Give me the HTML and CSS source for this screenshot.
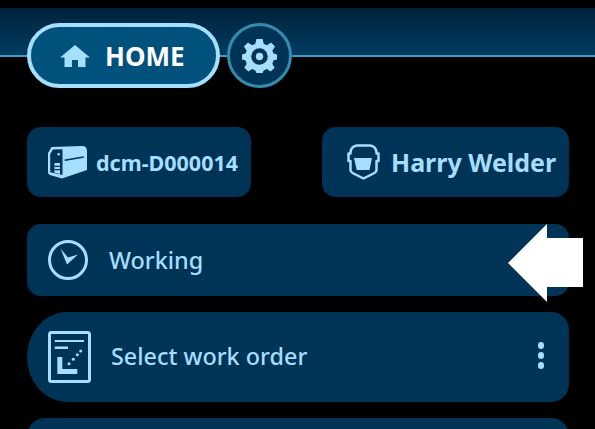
FILE: index.html
```html
<!DOCTYPE html>
<html lang="en">
<head>
  <meta charset="UTF-8" />
  <title>Home</title>
  <link rel="stylesheet" href="styles.css">
</head>
<body>

  <header class="topbar">
    <div class="topbar-nav">
      <div class="home-pill">
        <svg class="home-icon" viewBox="0 0 30 24">
          <path d="M15 1 L30 13.500 H25.500 V23 H18 V16 H12 V23 H4.500 V13.500 H0 Z" fill="#a5deff"/>
        </svg>
        <span>HOME</span>
      </div>
      <div class="gear-btn">
        <svg class="gear-icon" viewBox="0 0 36 36">
          <path fill="#a5deff" fill-rule="evenodd" d="M14.800 1 H21.200 L22.300 6 L25.600 7.400 L29.900 4.600 L34 8.800 L31.200 13 L32.500 16 L36 17 V22 L32.500 23 L31.200 26.500 L33.600 30.500 L29.500 34.500 L25.600 32 L22.300 33.300 L21.200 36 H14.800 L13.700 33.300 L10.400 32 L6.500 34.500 L2.400 30.500 L4.800 26.500 L3.500 23 L0 22 V17 L3.500 16 L4.800 13 L2 8.800 L6.100 4.600 L10.400 7.400 L13.700 6 Z M18 10.500 A8.500 8.500 0 1 0 18 27.500 A8.500 8.500 0 1 0 18 10.500 Z"/>
          <circle cx="18" cy="19" r="3.800" fill="#a5deff"/>
        </svg>
      </div>
    </div>
  </header>

  <main class="content">
    <div class="info-row">
      <div class="card card-printer">
        <svg class="printer-icon" viewBox="0 0 40 34">
          <path fill="#a5deff" d="M4.500 2 L35 1 Q40 1 40 6 V25 L15 33.500 L3 30 Q1 29.500 1 27 V8 Z"/>
          <path fill="#003457" d="M6 4.500 L15.500 4.200 V30 L3.200 27.300 V9 Z"/>
          <path fill="#a5deff" d="M7.500 18 H13 V29 L7.500 27.800 Z"/>
          <path fill="#003457" d="M7.500 20.800 H13 V22 H7.500 Z M7.500 24 H13 V25.200 H7.500 Z"/>
          <circle cx="11.700" cy="9.300" r="1.300" fill="#a5deff"/>
          <path fill="none" stroke="#003457" stroke-width="1.400" d="M17.700 15.300 L36.700 12"/>
        </svg>
        <span>dcm-D000014</span>
      </div>
      <div class="card card-user">
        <svg class="helmet-icon" viewBox="0 0 33 36">
          <path fill="none" stroke="#a5deff" stroke-width="2.500" stroke-linejoin="round" d="M10 1.500 H23 Q28.500 2 29.500 8 V9.500 H31.500 V17 H29.500 V26 Q29.500 28 27.500 29 L16.500 34.500 L5.500 29 Q3.500 28 3.500 26 V17 H1.500 V9.500 H3.500 V8 Q4.500 2 10 1.500 Z"/>
          <path fill="#a5deff" d="M7 14 H25 L22.500 26 H9.700 Z"/>
        </svg>
        <span>Harry Welder</span>
      </div>
    </div>

    <div class="row row-status">
      <svg class="clock-icon" viewBox="0 0 42 42">
        <circle cx="21" cy="21" r="18.500" fill="none" stroke="#a5deff" stroke-width="3"/>
        <path fill="#a5deff" d="M13.500 9.500 L21 18.500 L31 15.500 L20 25.500 Z"/>
      </svg>
      <span>Working</span>
    </div>

    <div class="row row-order">
      <svg class="order-icon" viewBox="0 0 44 52">
        <rect x="1.500" y="1.500" width="40" height="49" rx="2" fill="none" stroke="#a5deff" stroke-width="3"/>
        <path fill="#a5deff" d="M6.700 9 H36 V11 H6.700 Z M6.700 15.500 H20 V18 H6.700 Z M9.300 26 H14.300 V38 H29.300 V43 H9.300 Z"/>
        <circle cx="32.700" cy="20" r="1.500" fill="#a5deff"/>
        <circle cx="29.300" cy="23.700" r="1.500" fill="#a5deff"/>
        <circle cx="25.300" cy="28.300" r="1.500" fill="#a5deff"/>
        <circle cx="21" cy="32.700" r="1.500" fill="#a5deff"/>
      </svg>
      <span class="row-label">Select work order</span>
      <div class="dots"><i></i><i></i><i></i></div>
    </div>

    <div class="row row-next"></div>
  </main>

  <svg class="pointer" viewBox="0 0 75 78">
    <path fill="#fff" d="M0 39 L39 0 V14 H75 V63 H39 V78 Z"/>
  </svg>

</body>
</html>
```

FILE: styles.css
```css
html, body {
  height: 100%;
}

body {
  margin: 0;
  background: #000;
  color: #a5deff;
  font-family: "Noto Sans", sans-serif;
  overflow: hidden;
  position: relative;
}

.topbar {
  margin-top: 8px;
  height: 49px;
  box-sizing: border-box;
  background: linear-gradient(#00223a, #003c62);
  border-bottom: 2px solid #3f9ec4;
}

.topbar-nav {
  display: flex;
  gap: 7px;
  padding: 15px 0 0 27px;
}

.home-pill {
  width: 193px;
  height: 65px;
  box-sizing: border-box;
  border: 4px solid #a5deff;
  border-radius: 33px;
  background: #00527c;
  display: flex;
  align-items: center;
  gap: 15px;
  padding-left: 29px;
  color: #fff;
  font-size: 26px;
  font-weight: 700;
}

.home-icon {
  width: 30px;
  height: 24px;
}

.gear-btn {
  width: 65px;
  height: 65px;
  box-sizing: border-box;
  border: 3px solid #338cae;
  border-radius: 50%;
  background: #003457;
  display: flex;
  align-items: center;
  justify-content: center;
}

.gear-icon {
  width: 35px;
  height: 35px;
}

.content {
  height: 372px;
  box-sizing: border-box;
  padding: 70px 26px 0 27px;
  display: flex;
  flex-direction: column;
  overflow: hidden;
}

.info-row {
  display: flex;
  justify-content: space-between;
  flex: none;
  margin-bottom: 27px;
}

.card {
  height: 70px;
  box-sizing: border-box;
  background: #003457;
  border-radius: 14px;
  display: flex;
  align-items: center;
  font-weight: 700;
}

.card-printer {
  width: 224px;
  padding-left: 20px;
  gap: 9px;
  font-size: 21.500px;
}

.card-user {
  width: 247px;
  padding-left: 25px;
  gap: 11px;
  font-size: 25px;
}

.printer-icon {
  width: 40px;
  height: 34px;
}

.helmet-icon {
  width: 33px;
  height: 36px;
}

.row {
  background: #003457;
  display: flex;
  flex: none;
  align-items: center;
  font-size: 23.400px;
  font-weight: 500;
}

.row-status {
  height: 72px;
  border-radius: 14px;
  padding-left: 20px;
  gap: 20px;
  margin-bottom: 16px;
}

.clock-icon {
  width: 42px;
  height: 42px;
}

.row-order {
  height: 90px;
  border-radius: 40px 18px 18px 40px / 45px 18px 18px 45px;
  padding: 0 25px 0 21px;
  gap: 19px;
  margin-bottom: 16px;
}

.order-icon {
  width: 44px;
  height: 52px;
}

.row-label {
  flex: 1;
  margin-top: -2px;
}

.dots {
  display: flex;
  flex-direction: column;
  gap: 3.500px;
  margin-top: -3px;
}

.dots i {
  width: 6.500px;
  height: 6.500px;
  border-radius: 50%;
  background: #a5deff;
}

.row-next {
  height: 90px;
  border-radius: 18px;
}

/* sits on top of the status row */
.pointer {
  position: absolute;
  left: 508px;
  top: 224px;
  width: 75px;
  height: 78px;
}
```
